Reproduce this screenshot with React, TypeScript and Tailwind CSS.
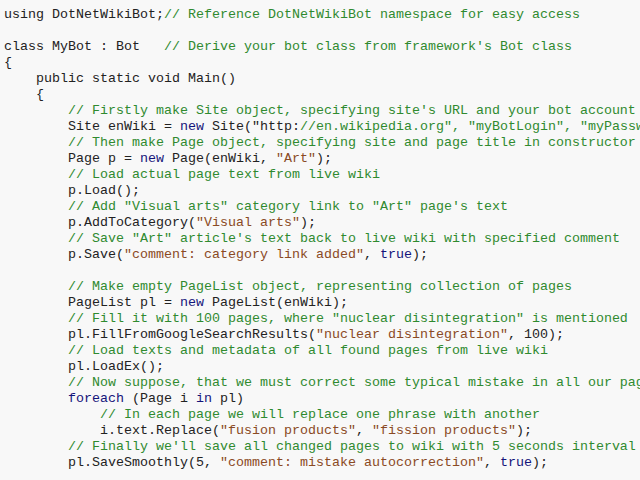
import React from 'react';

// Source listing, one entry per line (4-space indents kept as-is)
const lines: string[] = [
    'using DotNetWikiBot;// Reference DotNetWikiBot namespace for easy access',
    '',
    "class MyBot : Bot   // Derive your bot class from framework's Bot class",
    '{',
    '    public static void Main()',
    '    {',
    "        // Firstly make Site object, specifying site's URL and your bot account",
    '        Site enWiki = new Site("http://en.wikipedia.org", "myBotLogin", "myPassword");',
    '        // Then make Page object, specifying site and page title in constructor',
    '        Page p = new Page(enWiki, "Art");',
    '        // Load actual page text from live wiki',
    '        p.Load();',
    '        // Add "Visual arts" category link to "Art" page\'s text',
    '        p.AddToCategory("Visual arts");',
    '        // Save "Art" article\'s text back to live wiki with specified comment',
    '        p.Save("comment: category link added", true);',
    '',
    '        // Make empty PageList object, representing collection of pages',
    '        PageList pl = new PageList(enWiki);',
    '        // Fill it with 100 pages, where "nuclear disintegration" is mentioned',
    '        pl.FillFromGoogleSearchResults("nuclear disintegration", 100);',
    '        // Load texts and metadata of all found pages from live wiki',
    '        pl.LoadEx();',
    '        // Now suppose, that we must correct some typical mistake in all our pages',
    '        foreach (Page i in pl)',
    '            // In each page we will replace one phrase with another',
    '            i.text.Replace("fusion products", "fission products");',
    "        // Finally we'll save all changed pages to wiki with 5 seconds interval",
    '        pl.SaveSmoothly(5, "comment: mistake autocorrection", true);',
];

const tokenRe = /("[^"]*")|\b(new|true|foreach|in)\b/g;

// Tiny highlighter: strings brown, a few keywords navy, the rest plain
const renderCode = (code: string) => {
    const out: React.ReactNode[] = [];
    let last = 0;
    let m: RegExpExecArray | null;
    let k = 0;
    tokenRe.lastIndex = 0;
    while ((m = tokenRe.exec(code))) {
        if (m.index > last) out.push(code.slice(last, m.index));
        out.push(
            <span key={k++} className={m[1] ? 'text-[#8a4a24]' : 'text-[#14147a]'}>
                {m[0]}
            </span>
        );
        last = m.index + m[0].length;
    }
    if (last < code.length) out.push(code.slice(last));
    return out;
};

const CodeLine = ({ text }: { text: string }) => {
    const idx = text.indexOf('//');
    const code = idx >= 0 ? text.slice(0, idx) : text;
    const comment = idx >= 0 ? text.slice(idx) : '';
    return (
        <div className="h-4 whitespace-pre">
            {renderCode(code)}
            {comment && <span className="text-[#2f8a2f]">{comment}</span>}
        </div>
    );
};

export default function App() {
    return (
        <div className="w-[640px] h-[480px] overflow-hidden bg-[#f8f8f8]">
            <div className="pl-1 pt-[7px] text-[13.33px] leading-4 text-[#222222] font-['Liberation_Mono','Courier_New',monospace]">
                {lines.map((l, i) => (
                    <CodeLine key={i} text={l} />
                ))}
            </div>
        </div>
    );
}
